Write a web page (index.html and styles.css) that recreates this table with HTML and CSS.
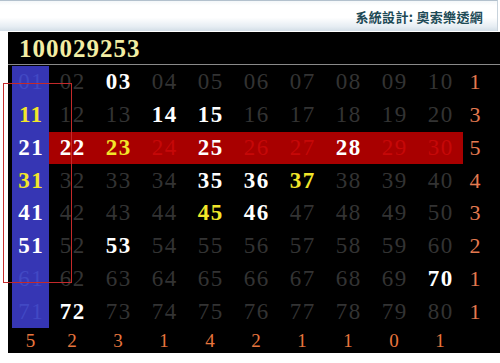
FILE: index.html
```html
<!DOCTYPE html>
<html lang="zh-Hant">
<head>
<meta charset="utf-8">
<title>100029253</title>
<link rel="stylesheet" href="styles.css">
</head>
<body>
<header class="top"><span class="credit">系統設計: 奧索樂透網</span></header>
<main class="board">
  <div class="title">100029253</div>
  <div class="grid">
    <span class="c b dim">01</span><span class="c g">02</span><span class="c w">03</span><span class="c g">04</span><span class="c g">05</span><span class="c g">06</span><span class="c g">07</span><span class="c g">08</span><span class="c g">09</span><span class="c g">10</span><span class="n">1</span>
    <span class="c b y">11</span><span class="c g">12</span><span class="c g">13</span><span class="c w">14</span><span class="c w">15</span><span class="c g">16</span><span class="c g">17</span><span class="c g">18</span><span class="c g">19</span><span class="c g">20</span><span class="n">3</span>
    <span class="c b w">21</span><span class="c r w">22</span><span class="c r y">23</span><span class="c r dim">24</span><span class="c r w">25</span><span class="c r dim">26</span><span class="c r dim">27</span><span class="c r w">28</span><span class="c r dim">29</span><span class="c r dim">30</span><span class="n">5</span>
    <span class="c b y">31</span><span class="c g">32</span><span class="c g">33</span><span class="c g">34</span><span class="c w">35</span><span class="c w">36</span><span class="c y">37</span><span class="c g">38</span><span class="c g">39</span><span class="c g">40</span><span class="n">4</span>
    <span class="c b w">41</span><span class="c g">42</span><span class="c g">43</span><span class="c g">44</span><span class="c y">45</span><span class="c w">46</span><span class="c g">47</span><span class="c g">48</span><span class="c g">49</span><span class="c g">50</span><span class="n">3</span>
    <span class="c b w">51</span><span class="c g">52</span><span class="c w">53</span><span class="c g">54</span><span class="c g">55</span><span class="c g">56</span><span class="c g">57</span><span class="c g">58</span><span class="c g">59</span><span class="c g">60</span><span class="n">2</span>
    <span class="c b dim">61</span><span class="c g">62</span><span class="c g">63</span><span class="c g">64</span><span class="c g">65</span><span class="c g">66</span><span class="c g">67</span><span class="c g">68</span><span class="c g">69</span><span class="c w">70</span><span class="n">1</span>
    <span class="c b dim">71</span><span class="c w">72</span><span class="c g">73</span><span class="c g">74</span><span class="c g">75</span><span class="c g">76</span><span class="c g">77</span><span class="c g">78</span><span class="c g">79</span><span class="c g">80</span><span class="n">1</span>
    <span class="f">5</span><span class="f">2</span><span class="f">3</span><span class="f">1</span><span class="f">4</span><span class="f">2</span><span class="f">1</span><span class="f">1</span><span class="f">0</span><span class="f">1</span><span class="f"></span>
  </div>
</main>
<div class="mark"></div>
</body>
</html>
```

FILE: styles.css
```css
html, body {
  margin: 0;
  padding: 0;
  background: #ffffff;
}
body {
  width: 500px;
  height: 363px;
  overflow: hidden;
  position: relative;
  font-family: "Liberation Serif", "Times New Roman", serif;
}
.top {
  box-sizing: border-box;
  width: 498px;
  height: 31px;
  border-top: 1px solid #b3c1cd;
  border-right: 1px solid #c8d3dc;
  background: linear-gradient(#f4f7f9 0%, #ffffff 15%, #ffffff 55%, #e6edf3 85%, #d3dee7 100%);
  display: flex;
  justify-content: flex-end;
  align-items: center;
  padding-right: 14px;
}
.credit {
  font-family: "Noto Sans CJK TC", "Noto Sans", sans-serif;
  font-weight: 700;
  font-size: 13px;
  color: #1d4a56;
  letter-spacing: 0.3px;
}
.board {
  margin: 1px 0 0 8px;
  height: 321px;
  background: #000000;
  display: flex;
  flex-direction: column;
}
.title {
  height: 33px;
  line-height: 34px;
  padding-left: 11px;
  font-size: 25px;
  font-weight: 700;
  letter-spacing: 1px;
  color: #f3eea4;
  border-bottom: 1px solid #8a8a8a;
  box-sizing: border-box;
}
.grid {
  margin: 1px 0 0 4px;
  display: grid;
  grid-template-columns: 37px repeat(9, 46px) 24px;
  grid-template-rows: repeat(8, 32.75px) 25px;
}
.c {
  display: flex;
  align-items: center;
  justify-content: center;
  font-size: 23px;
  letter-spacing: 1.5px;
  padding-left: 1.5px;
  font-weight: 400;
}
.b { background: #3636b4; }
.r { background: #a80000; }
.g { color: #333333; }
.w { color: #ffffff; font-weight: 700; }
.y { color: #f2e62a; font-weight: 700; }
.b.dim { color: #4249c4; }
.r.dim { color: #c60808; }
.n {
  display: flex;
  align-items: center;
  justify-content: center;
  font-size: 22px;
  color: #e47a50;
}
.f {
  display: flex;
  align-items: center;
  justify-content: center;
  font-size: 19px;
  color: #e8763e;
}
.mark {
  position: absolute;
  left: 3px;
  top: 83px;
  width: 67px;
  height: 198px;
  border: 1px solid #c42a2a;
}
```
